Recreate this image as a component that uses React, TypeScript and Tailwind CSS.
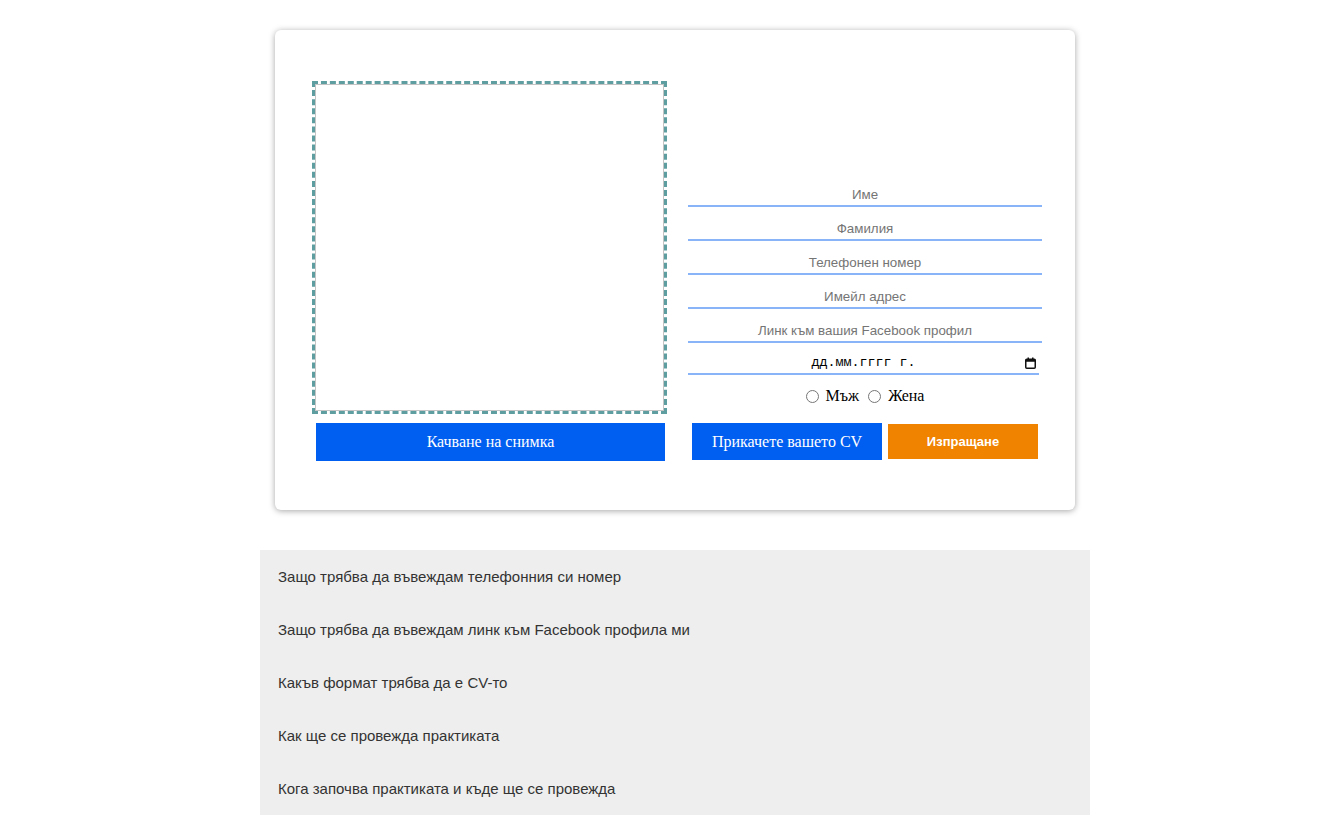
import React from "react";

const fields = [
  "Име",
  "Фамилия",
  "Телефонен номер",
  "Имейл адрес",
  "Линк към вашия Facebook профил",
];

const faqs = [
  "Защо трябва да въвеждам телефонния си номер",
  "Защо трябва да въвеждам линк към Facebook профила ми",
  "Какъв формат трябва да е CV-то",
  "Как ще се провежда практиката",
  "Кога започва практиката и къде ще се провежда",
];

function CalendarIcon() {
  return (
    <svg width="11" height="12" viewBox="0 0 11 12" className="shrink-0">
      <rect x="0.75" y="2.25" width="9.5" height="9" rx="1" fill="none" stroke="#111" strokeWidth="1.5" />
      <rect x="0.75" y="2.25" width="9.5" height="2.5" fill="#111" />
      <rect x="2.5" y="0.5" width="1.5" height="2" fill="#111" />
      <rect x="7" y="0.5" width="1.5" height="2" fill="#111" />
    </svg>
  );
}

export default function App() {
  return (
    <div className="min-h-[815px] bg-white pl-[17px] font-['Liberation_Serif',serif]">
      <div className="mx-auto w-[830px] pt-[30px]">
        <div className="mx-auto flex h-[480px] w-[800px] rounded-md bg-white pl-[37px] pr-[33px] pt-[51px] shadow-[0_1px_6px_rgba(0,0,0,0.35)]">
          {/* photo column */}
          <div className="flex w-[355px] flex-col">
            <div className="h-[333px] w-[355px] border-[3px] border-dashed border-[#5f9ea0]">
              <div className="h-full w-full border border-[#c4c4c4]" />
            </div>
            <button className="ml-[4px] mt-[9px] h-[38px] w-[349px] bg-[#005ef0] text-[16px] text-white">
              Качване на снимка
            </button>
          </div>

          {/* form column */}
          <div className="ml-[21px] flex w-[354px] flex-col pt-[92px]">
            {fields.map((f) => (
              <input
                key={f}
                placeholder={f}
                className="mt-[10px] h-[24px] w-full border-b-2 border-[#8ab4f8] bg-transparent text-center font-['Liberation_Sans',Arial,sans-serif] text-[13.333px] leading-[22px] text-black outline-none placeholder:text-[#757575]"
              />
            ))}
            <div className="mt-[10px] flex h-[22px] w-[351px] items-center border-b-2 border-[#8ab4f8] pr-[3px]">
              <span className="flex-1 pl-[14px] text-center font-['Liberation_Mono',monospace] text-[13.333px] text-black">
                дд.мм.гггг г.
              </span>
              <CalendarIcon />
            </div>
            <div className="mt-[9px] flex items-center justify-center text-[16px] text-black">
              <label className="flex items-center">
                <input type="radio" name="gender" className="m-0 mr-[7px] h-[13px] w-[13px]" />
                Мъж
              </label>
              <label className="ml-[9px] flex items-center">
                <input type="radio" name="gender" className="m-0 mr-[7px] h-[13px] w-[13px]" />
                Жена
              </label>
            </div>
            <div className="mt-[15px] flex items-center justify-center gap-[6px]">
              <button className="h-[37px] w-[190px] bg-[#005ef0] text-[16px] text-white">
                Прикачете вашето CV
              </button>
              <button className="h-[35px] w-[150px] bg-[#f08300] font-['Liberation_Sans',Arial,sans-serif] text-[13px] font-bold text-white">
                Изпращане
              </button>
            </div>
          </div>
        </div>

        {/* faq */}
        <div className="mt-[40px] bg-[#eeeeee] pb-[10px] pl-[18px] pt-[18px] font-['Liberation_Sans',Arial,sans-serif] text-[15px] text-[#333]">
          {faqs.map((q) => (
            <div key={q} className="h-[53px] leading-[18px]">
              {q}
            </div>
          ))}
        </div>
      </div>
    </div>
  );
}
